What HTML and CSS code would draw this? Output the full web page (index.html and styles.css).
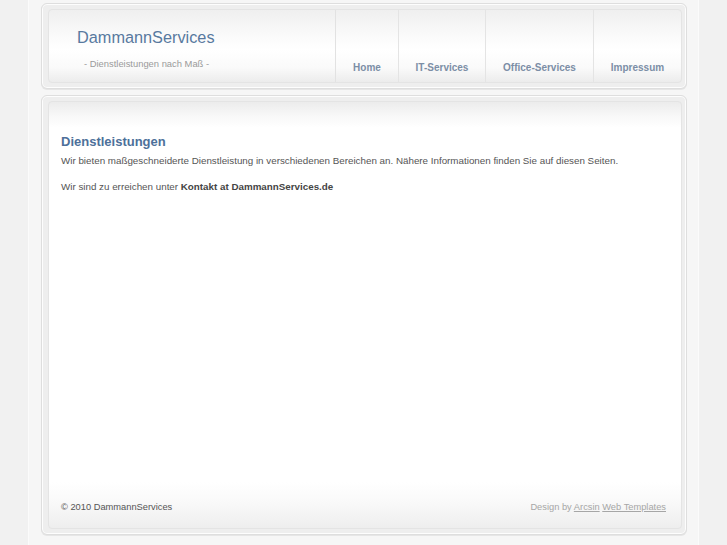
FILE: index.html
```html
<!DOCTYPE html>
<html lang="de">
<head>
<meta charset="utf-8">
<title>DammannServices</title>
<link rel="stylesheet" href="styles.css">
</head>
<body>
<div class="page">
  <div class="box header-box">
    <div class="panel header">
      <div class="brand">
        <h1 class="logo">DammannServices</h1>
        <p class="slogan">- Dienstleistungen nach Maß -</p>
      </div>
      <ul class="nav">
        <li class="nav-item nav-home"><a href="#">Home</a></li>
        <li class="nav-item nav-it"><a href="#">IT-Services</a></li>
        <li class="nav-item nav-office"><a href="#">Office-Services</a></li>
        <li class="nav-item nav-imp"><a href="#">Impressum</a></li>
      </ul>
    </div>
  </div>
  <div class="box content-box">
    <div class="panel content">
      <div class="main">
        <h2 class="heading">Dienstleistungen</h2>
        <p class="text">Wir bieten maßgeschneiderte Dienstleistung in verschiedenen Bereichen an. Nähere Informationen finden Sie auf diesen Seiten.</p>
        <p class="text">Wir sind zu erreichen unter <strong>Kontakt at DammannServices.de</strong></p>
      </div>
      <div class="footer">
        <span class="copy">© 2010 DammannServices</span>
        <span class="credit">Design by <a href="#">Arcsin</a> <a href="#">Web Templates</a></span>
      </div>
    </div>
  </div>
</div>
</body>
</html>
```
FILE: styles.css
```css
html, body {
  margin: 0;
  padding: 0;
}
body {
  background: #f1f1f1;
  font-family: "Liberation Sans", Arial, sans-serif;
  height: 545px;
  overflow: hidden;
}
.page {
  width: 671px;
  margin: 0 auto;
  height: 545px;
  background: #f6f6f6;
  border-left: 1px solid #fbfbfb;
  border-right: 1px solid #fbfbfb;
  padding: 3px 0 0 0;
  box-sizing: border-box;
  display: flex;
  flex-direction: column;
  gap: 6px;
}
.box {
  margin: 0 11px 0 12px;
  border: 1px solid #dedede;
  border-radius: 6px;
  background: #eeeeee;
  box-shadow: inset 0 0 0 1px #fdfdfd, 0 1px 0 #e6e6e6;
  padding: 5px 4px 5px 6px;
}
.panel {
  border: 1px solid #e4e4e4;
  border-radius: 4px;
}
.header {
  height: 72px;
  display: flex;
  justify-content: space-between;
  background: linear-gradient(#efefef 0%, #fafafa 35%, #ffffff 55%, #fafafa 80%, #ececec 100%);
}
.brand {
  padding: 16px 0 0 28px;
}
.logo {
  margin: 0;
  font-size: 16.3px;
  font-weight: normal;
  color: #58799f;
  line-height: 22px;
}
.slogan {
  margin: 10px 0 0 7px;
  font-size: 9.4px;
  color: #9a9a9a;
}
.nav {
  list-style: none;
  margin: 0;
  padding: 0;
  display: flex;
  border-left: 1px solid #e2e2e2;
}
.nav-item {
  border-left: 1px solid #e4e4e4;
  display: flex;
  align-items: flex-end;
  justify-content: center;
  padding-bottom: 9px;
}
.nav-item:first-child {
  border-left: 0;
}
.nav-home { width: 62px; }
.nav-it { width: 86px; }
.nav-office { width: 107px; }
.nav-imp { width: 87px; }
.nav-item a {
  font-size: 10px;
  font-weight: bold;
  color: #7c8ea6;
  text-decoration: none;
}
.content {
  height: 426px;
  display: flex;
  flex-direction: column;
  justify-content: space-between;
  background: linear-gradient(#ececec 0px, #f8f8f8 14px, #ffffff 26px, #ffffff 380px, #fafafa 398px, #eeeeee 100%);
}
.main {
  padding: 32px 20px 0 12px;
}
.heading {
  margin: 0 0 4px 0;
  font-size: 13px;
  font-weight: bold;
  color: #4d709a;
}
.text {
  margin: 0 0 11px 0;
  font-size: 9.8px;
  line-height: 15px;
  color: #555555;
}
.text strong {
  color: #444444;
}
.footer {
  display: flex;
  justify-content: space-between;
  padding: 0 15px 16px 12px;
  font-size: 9.3px;
}
.copy {
  color: #555555;
}
.credit {
  color: #a6a6a6;
}
.credit a {
  color: #a6a6a6;
}
```
